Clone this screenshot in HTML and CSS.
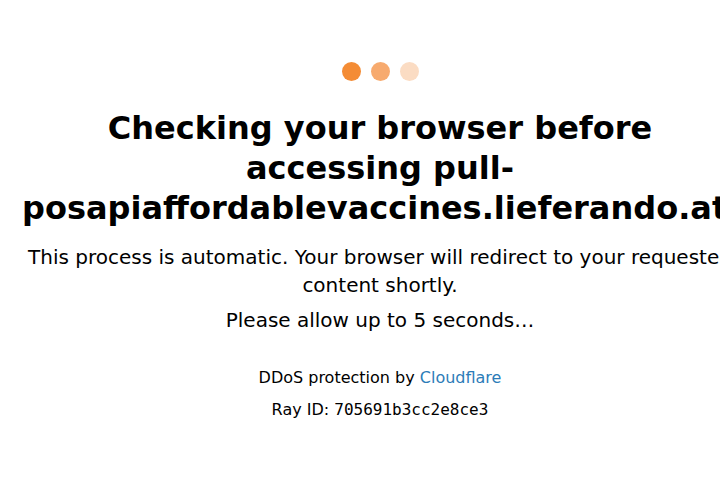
FILE: index.html
```html
<!DOCTYPE html>
<html>
<head>
<meta charset="utf-8">
<link rel="stylesheet" href="styles.css">
</head>
<body>
<div class="wrapper">
  <div class="content">
    <div class="dots">
      <span class="dot d1"></span>
      <span class="dot d2"></span>
      <span class="dot d3"></span>
    </div>
    <h1 class="title">Checking your browser before accessing pull-posapiaffordablevaccines.lieferando.at.</h1>
    <p class="lead">This process is automatic. Your browser will redirect to your requested content shortly.</p>
    <p class="lead wait">Please allow up to 5 seconds…</p>
    <p class="small protect">DDoS protection by <a class="link" href="#">Cloudflare</a></p>
    <p class="small ray">Ray ID: <code class="mono">705691b3cc2e8ce3</code></p>
  </div>
</div>
</body>
</html>
```
FILE: styles.css
```css
html, body {
  margin: 0;
  padding: 0;
  background: #ffffff;
  overflow: hidden;
}
body {
  font-family: "DejaVu Sans", sans-serif;
  color: #000;
}
.wrapper {
  padding-left: 22px;
  padding-top: 62px;
}
.content {
  width: 716px;
  text-align: center;
}
.dots {
  display: flex;
  justify-content: center;
  gap: 10px;
  height: 20px;
}
.dot {
  width: 19px;
  height: 19px;
  border-radius: 50%;
  display: block;
}
.d1 { background: #f48c35; }
.d2 { background: #f7aa6e; }
.d3 { background: #fbdcc3; }
.title {
  font-size: 32px;
  line-height: 40px;
  font-weight: bold;
  margin: 26px 0 0;
}
.lead {
  font-size: 20px;
  line-height: 28px;
  margin: 15px 0 0;
}
.wait {
  margin-top: 7px;
}
.small {
  font-size: 16px;
  line-height: 22px;
  margin: 0;
}
.protect {
  margin-top: 33px;
}
.ray {
  margin-top: 10px;
}
.link {
  color: #2c7cb8;
  text-decoration: none;
}
.mono {
  font-family: "DejaVu Sans Mono", monospace;
  font-size: 16px;
}
```
